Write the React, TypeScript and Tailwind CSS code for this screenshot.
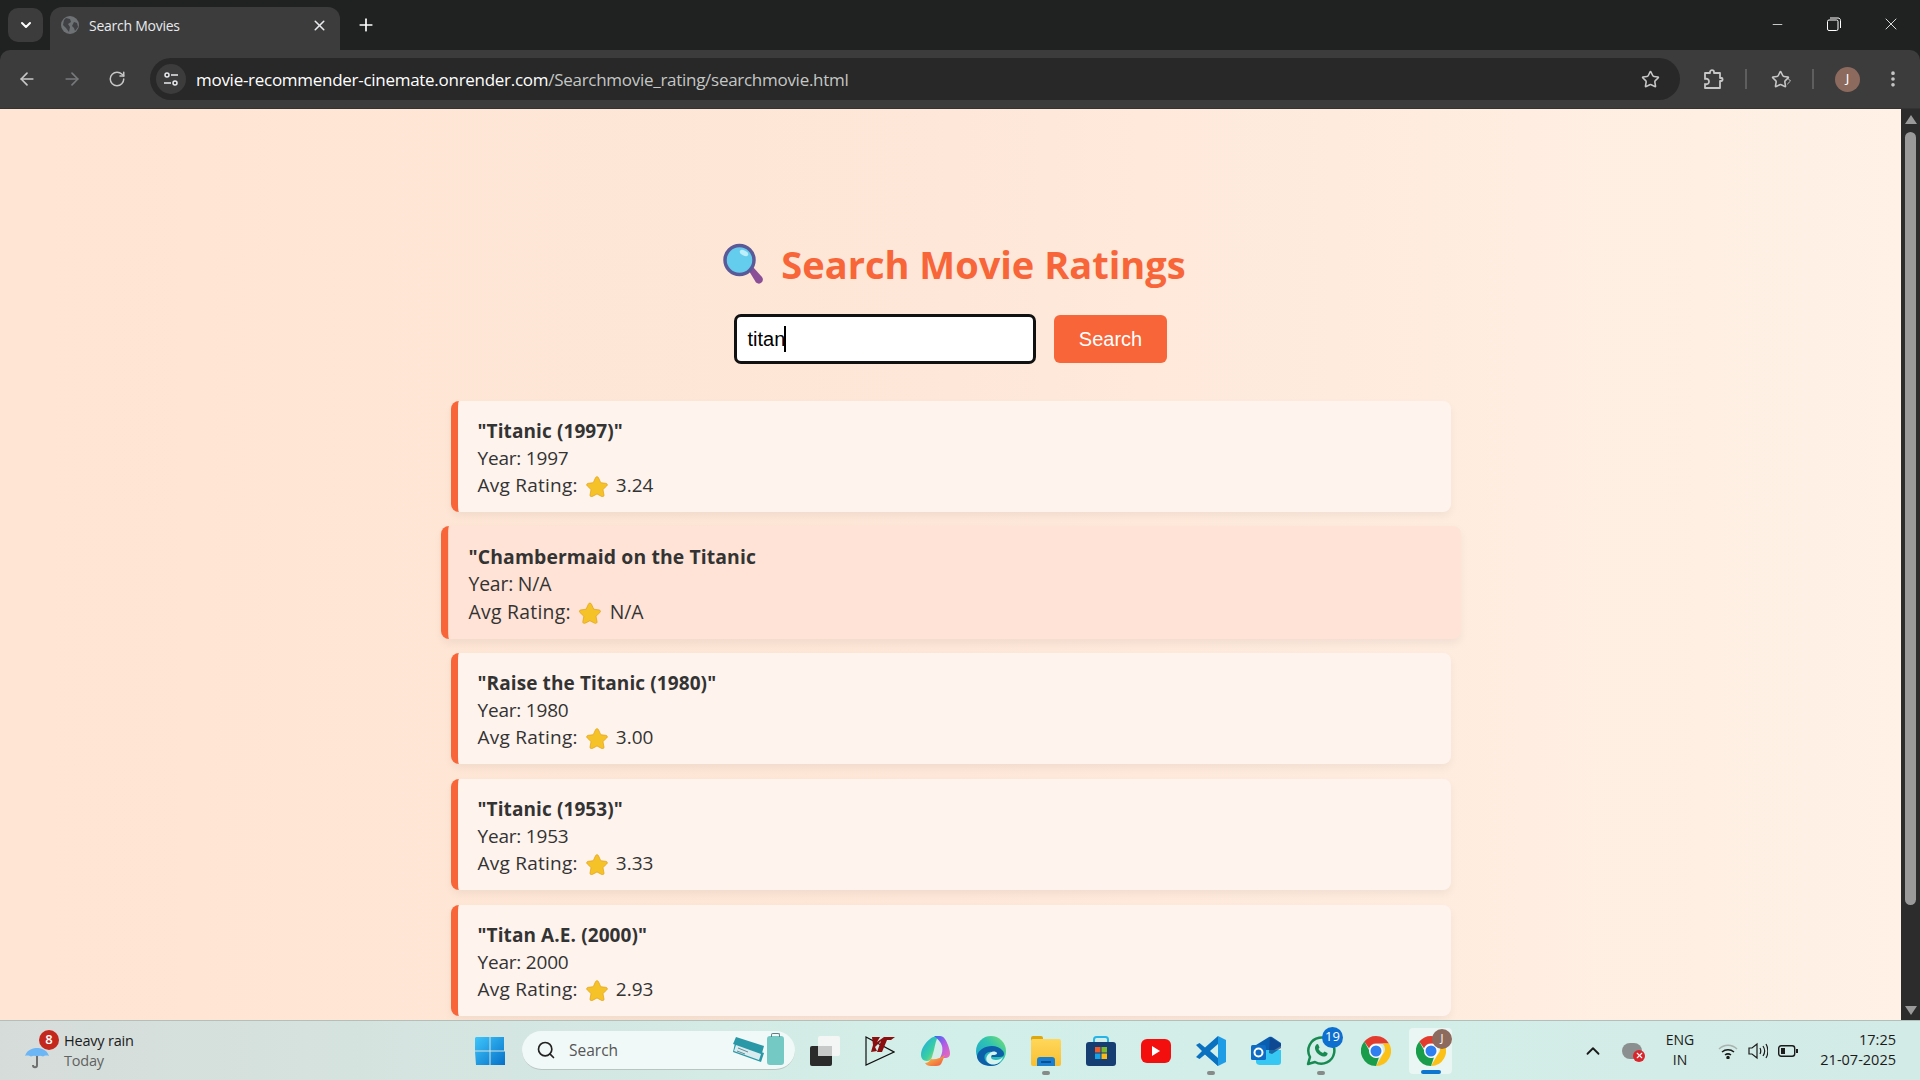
import { ArrowLeft, ArrowRight, ChevronDown, ChevronUp, EllipsisVertical, Minus, Plus, RotateCw, Search, Star, X } from "lucide-react";

const movies = [
  { title: '"Titanic (1997)"', year: "1997", rating: "3.24" },
  { title: '"Chambermaid on the Titanic', year: "N/A", rating: "N/A", hover: true },
  { title: '"Raise the Titanic (1980)"', year: "1980", rating: "3.00" },
  { title: '"Titanic (1953)"', year: "1953", rating: "3.33" },
  { title: '"Titan A.E. (2000)"', year: "2000", rating: "2.93" },
];

function GoldStar() {
  return (
    <svg width="22" height="22" viewBox="0 0 24 24" className="ml-[8px] mr-[8px] shrink-0">
      <path
        d="M12 1.8c.8 0 1.3.5 1.7 1.3l2.4 5.3 5.5.7c1.700.2 2.200 1.800 1 2.900l-4.100 3.900 1.100 5.700c.3 1.600-1.200 2.600-2.600 1.800L12 20.700l-5 2.700c-1.400.8-2.900-.2-2.600-1.800l1.100-5.700-4.100-3.900c-1.200-1.100-.7-2.700 1-2.900l5.500-.7 2.400-5.300c.4-.8.9-1.300 1.700-1.300z"
        fill="#f5c227"
        stroke="#e2a21b"
        strokeWidth="0.8"
      />
    </svg>
  );
}

function Magnifier() {
  return (
    <svg width="42" height="42" viewBox="0 0 42 42" className="mr-[17px] shrink-0">
      <path d="M27 28l4-4 9 10c1.500 2 1 4-.5 5.500s-3.500 1.500-5.500 0z" fill="#8a4f96" />
      <circle cx="17.500" cy="17" r="14.500" fill="#64cdee" stroke="#5b5a99" strokeWidth="3.500" />
      <ellipse cx="22" cy="10" rx="4.500" ry="2.500" fill="#bdeefa" transform="rotate(25 22 10)" />
    </svg>
  );
}

function MovieCard({ title, year, rating, hover }: { title: string; year: string; rating: string; hover?: boolean }) {
  return (
    <div
      className={`h-[111px] w-[1000px] shrink-0 rounded-lg border-l-[7px] border-[#f76538] px-5 pt-[17px] text-[19px] leading-[27px] text-[#333333] shadow-[0_4px_8px_rgba(0,0,0,0.05)] ${
        hover ? "scale-[1.02] bg-[#ffe3d6]" : "bg-[#fff3ee]"
      }`}
    >
      <div className="font-bold tracking-[0.1px]">{title}</div>
      <div className="tracking-[-0.2px]">Year: {year}</div>
      <div className="flex items-center">
        <span className="tracking-[0.25px]">Avg Rating:</span>
        <GoldStar /> {rating}
      </div>
    </div>
  );
}

function Globe() {
  return (
    <svg width="18" height="18" viewBox="0 0 18 18">
      <circle cx="9" cy="9" r="9" fill="#6f7275" />
      <path d="M5 2l4 1 1 3-3 2 2 3-1 5-3-4-3-3 1-5zM13 6l3 1 1 4-3 4-1-3-2-2z" fill="#3f4144" />
    </svg>
  );
}

function ChromeLogo() {
  return (
    <svg width="30" height="30" viewBox="0 0 30 30">
      <path d="M15 0a15 15 0 0 1 13 7.500H15a7.500 7.500 0 0 0-7 4.800L3.300 5.600A15 15 0 0 1 15 0z" fill="#e33b2e" />
      <path d="M28 7.500A15 15 0 0 1 15 30l6.500-11.200a7.500 7.500 0 0 0 0-11.300z" fill="#fbc117" />
      <path d="M3.300 5.600L8.500 15a7.500 7.500 0 0 0 9.500 6.300L15 30A15 15 0 0 1 3.300 5.600z" fill="#199d4b" />
      <circle cx="15" cy="15" r="7" fill="#fff" />
      <circle cx="15" cy="15" r="5.500" fill="#2f7ff0" />
    </svg>
  );
}

function Edge() {
  return (
    <svg width="30" height="30" viewBox="0 0 30 30">
      <defs>
        <linearGradient id="edgeTop" x1="0" y1="1" x2="1" y2="0">
          <stop offset="0" stopColor="#1a9fd8" />
          <stop offset="0.6" stopColor="#2fc4b0" />
          <stop offset="1" stopColor="#7fe06a" />
        </linearGradient>
      </defs>
      <circle cx="15" cy="15" r="15" fill="url(#edgeTop)" />
      <path d="M1 20C3 10 20 6 27 15c2 3 1 6-3 6h-7c-3 0-4-3-1-5-5-1-9 3-7 8 2 4 9 6 16 2-3 3-7 4-10 4C7 30 1 26 1 20z" fill="#0c5fa8" />
      <path d="M14 17c2-2 6-2 7 0 0 2-3 2-5 2-2 2-1 5 4 5 3 0 5-1 7-3-2 6-8 9-13 7-5-2-5-8 0-11z" fill="#d7f3ee" />
    </svg>
  );
}

function Folder() {
  return (
    <div className="relative h-[30px] w-[30px]">
      <div className="absolute left-0 top-0 h-2 w-3 rounded-t-[2px] bg-[#dda80f]" />
      <div className="absolute left-0 top-[3px] h-[27px] w-[30px] rounded-[2px] bg-gradient-to-b from-[#ffd75a] to-[#f9bf2e]" />
      <div className="absolute bottom-0 left-[6px] h-[9px] w-[18px] rounded-t-[3px] bg-[#1a7fd0]" />
      <div className="absolute bottom-[3px] left-[10px] h-[2px] w-[10px] bg-[#0c4f92]" />
    </div>
  );
}

function Store() {
  return (
    <svg width="30" height="30" viewBox="0 0 30 30">
      <path d="M8 7V3.500C8 2 9 1 10.500 1h9C21 1 22 2 22 3.500V7" fill="none" stroke="#27b5e8" strokeWidth="2" />
      <rect x="0" y="6" width="30" height="24" rx="3" fill="#173e72" />
      <rect x="9" y="11" width="5.500" height="5.500" fill="#f05a27" />
      <rect x="15.500" y="11" width="5.500" height="5.500" fill="#7dbb2c" />
      <rect x="9" y="17.500" width="5.500" height="5.500" fill="#15a3e8" />
      <rect x="15.500" y="17.500" width="5.500" height="5.500" fill="#fbb917" />
    </svg>
  );
}

function Vscode() {
  return (
    <svg width="30" height="30" viewBox="0 0 30 30">
      <path d="M22 0l8 4v22l-8 4-13-12 13-10v-8z" fill="#1f9ce6" />
      <path d="M22 0v30L9 18.500 3.500 23 0 21l6-6-6-6 3.500-2L9 11.500z" fill="#0a71c0" />
      <path d="M22 8l-8 7 8 7z" fill="#d3efe9" />
    </svg>
  );
}

function Outlook() {
  return (
    <svg width="30" height="30" viewBox="0 0 30 30">
      <path d="M5 9l13-8c1-.5 2-.5 3 0l9 6v3L18 17H5z" fill="#0a5eb0" />
      <path d="M5 14h25v12c0 2-1 3-3 3H9c-2 0-4-1-4-3z" fill="#36c8f2" />
      <path d="M19 1l11 7v4l-9 6-3-1z" fill="#0f3f86" opacity="0.7" />
      <rect x="0" y="9" width="15" height="15" rx="1.500" fill="#0f6cc4" />
      <circle cx="7.500" cy="16.500" r="4" fill="none" stroke="#fff" strokeWidth="2" />
    </svg>
  );
}

function Whatsapp() {
  return (
    <svg width="30" height="30" viewBox="0 0 30 30">
      <path d="M2 28l2-7A13 13 0 1 1 9 26z" fill="none" stroke="#178a52" strokeWidth="2.500" strokeLinejoin="round" />
      <path d="M10 9c1-1.500 2-1 2.500 0l1 2.500-1 1.500c1 2 2.500 3 4.500 4l1.500-1.500 3 1.500c.5 2-2 4-4 3.500-4-.5-8-4-8.500-8-.2-1.500.3-2.500 1-3.500z" fill="#178a52" />
    </svg>
  );
}

function Copilot() {
  return (
    <svg width="30" height="30" viewBox="0 0 30 30">
      <defs>
        <linearGradient id="copA" x1="0" y1="0" x2="1" y2="1">
          <stop offset="0" stopColor="#1aa7ec" />
          <stop offset="0.6" stopColor="#3ad0a0" />
          <stop offset="1" stopColor="#f6d34a" />
        </linearGradient>
        <linearGradient id="copB" x1="0" y1="0" x2="1" y2="1">
          <stop offset="0" stopColor="#2a6cf0" />
          <stop offset="0.5" stopColor="#b05ce8" />
          <stop offset="1" stopColor="#f06cb0" />
        </linearGradient>
        <linearGradient id="copC" x1="0" y1="0" x2="1" y2="1">
          <stop offset="0" stopColor="#f6d34a" />
          <stop offset="1" stopColor="#f0503c" />
        </linearGradient>
      </defs>
      <path d="M9 3c2-2 5-3 8-2-2 3-3 8-4 13l-2 7c-1 3-3 4-5 4-4 0-6-3-6-6 0-6 4-12 9-16z" fill="url(#copA)" />
      <path d="M13 0h6c4 0 6 4 8 9 2 6 4 12-2 13h-6c2-4 3-8 2-12-1-4-4-7-8-10z" fill="url(#copB)" />
      <path d="M10 23c4 1 10-1 14-4l-3 7c-1 3-3 4-6 4h-5c-3 0-5-1-6-3 2 0 4-1 6-4z" fill="url(#copC)" />
    </svg>
  );
}

function TaskIcon({ children, dot, active }: { children: React.ReactNode; dot?: boolean; active?: boolean }) {
  return (
    <div className={`relative mx-[6px] flex h-[46px] w-[43px] items-center justify-center rounded-[4px] ${active ? "bg-[#e9f6f3]" : ""}`}>
      {children}
      {dot && <div className="absolute bottom-[-1px] h-[4px] w-2 rounded-full bg-[#868b8a]" />}
      {active && <div className="absolute bottom-0 h-[4px] w-5 rounded-full bg-[#0f76d0]" />}
    </div>
  );
}

export default function App() {
  return (
    <div className="flex h-[1080px] w-[1920px] flex-col overflow-hidden bg-[#202221] font-['Noto_Sans',sans-serif]">
      {/* tab strip */}
      <div className="flex h-[50px] shrink-0 items-end bg-[#202221] text-white">
        <div className="mb-2 ml-2 flex h-[34px] w-[35px] items-center justify-center rounded-[10px] bg-[#3c3c3c]">
          <ChevronDown size={16} strokeWidth={3} />
        </div>
        <div className="ml-[7px] flex h-[43px] w-[290px] items-center rounded-t-[12px] bg-[#3c3c3c] pb-[7px] pl-[11px] pr-[12px] font-['Open_Sans',sans-serif] text-[14px] text-[#e8eaed]">
          <Globe />
          <span className="ml-[10px] flex-1 tracking-[-0.25px]">Search Movies</span>
          <X size={17} strokeWidth={2.2} />
        </div>
        <Plus size={20} strokeWidth={2} className="mb-[15px] ml-[16px]" />
        <div className="mb-[16px] ml-auto flex items-center pr-[20px]">
          <Minus size={15} strokeWidth={1.2} className="mr-[42px]" />
          <svg width="14" height="14" viewBox="0 0 14 14" fill="none" stroke="white" strokeWidth="1" className="mr-[40px]">
            <rect x="0.500" y="3" width="10.500" height="10.500" rx="1.500" />
            <path d="M3 1h8c1.500 0 2.500 1 2.500 2.500V11" />
          </svg>
          <X size={20} strokeWidth={1} className="-mr-[1px]" />
        </div>
      </div>

      {/* toolbar */}
      <div className="flex h-[59px] shrink-0 items-center rounded-t-[10px] border-b border-[#333333] bg-[#3c3c3c] text-[#c7c7c7]">
        <ArrowLeft size={20} strokeWidth={2} className="ml-[17px]" />
        <ArrowRight size={20} strokeWidth={2} className="ml-[25px] text-[#77797b]" />
        <RotateCw size={18} strokeWidth={2} className="ml-[26px]" />
        <div className="ml-[24px] flex h-[42px] w-[1530px] items-center rounded-full bg-[#282828] pl-[6px] pr-[20px]">
          <div className="flex h-[30px] w-[30px] items-center justify-center rounded-full bg-[#3c3c3c]">
            <svg width="16" height="16" viewBox="0 0 16 16" fill="none" stroke="#e8eaed" strokeWidth="1.500">
              <circle cx="4" cy="4" r="2" />
              <path d="M8 4h7M1 12h7" />
              <circle cx="12" cy="12" r="2" />
            </svg>
          </div>
          <div className="ml-[10px] flex-1 pt-[1px] font-['Open_Sans',sans-serif] text-[17px] tracking-[-0.28px] text-white">
            movie-recommender-cinemate.onrender.com<span className="text-[#c4c7c5]">/Searchmovie_rating/searchmovie.html</span>
          </div>
          <Star size={19} strokeWidth={2} />
        </div>
        <svg width="20" height="20" viewBox="0 0 20 20" fill="none" stroke="#c7c7c7" strokeWidth="1.800" className="ml-[24px]">
          <path d="M1 4h5V3c0-2.500 4-2.500 4 0v1h6v5h1.500c1.500 0 1.500 3 0 3H16v7H1v-4c3 1 4-1 4-2.500S3.500 9 1 10z" strokeLinejoin="round" />
        </svg>
        <div className="ml-[21px] h-[20px] w-[2px] bg-[#5e5e5e]" />
        <div className="ml-[24px] flex w-[22px] items-center">
          <Star size={19} strokeWidth={2} className="shrink-0" />
          <ChevronDown size={12} strokeWidth={2} className="-ml-[7px] mt-[3px] shrink-0 -rotate-90" />
        </div>
        <div className="ml-[19px] h-[20px] w-[2px] bg-[#5e5e5e]" />
        <div className="ml-[21px] flex h-[25px] w-[25px] items-center justify-center rounded-full bg-[#8d6a5e] text-[13px] text-white">J</div>
        <EllipsisVertical size={20} strokeWidth={2.4} className="ml-[23px]" />
      </div>

      {/* page */}
      <div className="flex h-[911px] min-h-0 shrink-0">
        <div className="flex flex-1 flex-col items-center overflow-hidden bg-gradient-to-r from-[#ffe5d3] via-[#fee7d8] to-[#fff1e6] pt-[130px] font-['Open_Sans',sans-serif]">
          <div className="flex h-[50px] items-center pl-[7px] text-[38px] leading-[50px] font-bold text-[#f76538]">
            <Magnifier />
            <span>Search Movie Ratings</span>
          </div>
          <div className="mt-[25px] flex items-center gap-[18px] pr-[1px] font-['Liberation_Sans',sans-serif]">
            <div className="flex h-[50px] w-[302px] items-center rounded-[7px] border-[3px] border-[#111111] bg-white pb-[1px] pl-[11px] text-[20px] text-black">
              titan<span className="ml-[-1px] h-[26px] w-[2px] bg-black" />
            </div>
            <button className="h-[48px] w-[113px] rounded-[6px] bg-[#f76538] pb-[1px] pl-[1px] text-[20px] text-white">Search</button>
          </div>
          <div className="mt-[37px] flex flex-col gap-[15px]">
            {movies.map((movie) => (
              <MovieCard key={movie.title} {...movie} />
            ))}
          </div>
        </div>
        <div className="relative flex w-[19px] flex-col items-center bg-[#2c2c2c]">
          <div className="mt-[6px] h-0 w-0 border-x-[6px] border-b-[9px] border-x-transparent border-b-[#9a9a9a]" />
          <div className="mt-[8px] h-[773px] w-[11px] rounded-full bg-[#9a9a9a]" />
          <div className="mb-[5px] mt-auto h-0 w-0 border-x-[6px] border-t-[9px] border-x-transparent border-t-[#9a9a9a]" />
        </div>
      </div>

      {/* taskbar */}
      <div className="relative flex h-[60px] shrink-0 items-center border-t border-[#b2bfbb] bg-gradient-to-r from-[#d6dcd9] via-[#d3efe9] to-[#d3ebe6] font-['Open_Sans',sans-serif] text-[#1b1b1b]">
        <div className="ml-[24px] flex w-[436px] items-center">
          <div className="relative h-[40px] w-[40px]">
            <svg width="26" height="26" viewBox="0 0 26 26" className="absolute bottom-[1px] left-0">
              <path d="M1 12C3 5 10 4 13 4s10 1 12 8c-3-1-5 0-6 .5-2-1-4-1-6 0-2-1-4-1-6 0-1-.5-4-1.500-6-.5z" fill="#6cb6f5" />
              <path d="M13 12v9c0 3-4 3-4 0" fill="none" stroke="#6f6f6f" strokeWidth="2" />
            </svg>
            <div className="absolute left-[15px] top-[-1px] flex h-5 w-5 items-center justify-center rounded-full bg-[#c4281c] text-[13px] font-semibold text-white">8</div>
          </div>
          <div className="text-[14.500px] leading-[20px] tracking-[-0.2px]">
            <div>Heavy rain</div>
            <div className="text-[#5f6361]">Today</div>
          </div>
        </div>

        <div className="flex items-center">
          <svg width="30" height="30" viewBox="0 0 30 30" className="ml-[15px]">
            <defs>
              <linearGradient id="winLogo" x1="0" y1="0" x2="1" y2="1">
                <stop offset="0" stopColor="#3fc6fb" />
                <stop offset="1" stopColor="#0670c8" />
              </linearGradient>
            </defs>
            <path d="M1 1h13.500v13.500H0V2zM15.500 1H29v13.500H15.500zM0 15.500h14.500V29H1zM15.500 15.500H30V29H15.500z" fill="url(#winLogo)" />
          </svg>
          <div className="ml-[17px] flex h-[39px] w-[273px] items-center rounded-full border-b border-[#b8c6c2] bg-[#f0f9f7] pl-[14px] text-[15.500px] text-[#555]">
            <Search size={20} strokeWidth={2} className="text-[#222]" />
            <span className="ml-[13px] flex-1 pt-[1px]">Search</span>
            <svg width="32" height="26" viewBox="0 0 32 26">
              <path d="M3 0l28 9-2 7L0 7z" fill="#2a98a6" />
              <path d="M2 6l29 10-3 9L0 15z" fill="#2a98a6" />
              <path d="M3 8l25 9-2 6L1 14z" fill="#d8ecef" />
              <path d="M5 11l10 4M4 14l8 3" stroke="#6a8a94" strokeWidth="1" />
            </svg>
            <div className="relative ml-[2px] mr-[11px] h-[29px] w-[17px] rounded-[3px] bg-[#74c9c4]">
              <div className="absolute -top-[3px] left-[4px] h-[4px] w-[9px] rounded-t-[2px] border border-b-0 border-[#5f7f86]" />
            </div>
          </div>
          <div className="relative ml-[15px] h-[30px] w-[30px]">
            <div className="absolute right-0 top-0 h-[20px] w-[22px] rounded-[2px] bg-[#f4f6f5]" />
            <div className="absolute bottom-0 left-0 h-[20px] w-[22px] rounded-[2px] bg-[#2b2b2b]" />
            <div className="absolute left-[8px] top-[10px] h-[10px] w-[14px] bg-[#c6c9c8]" />
          </div>
          <svg width="30" height="30" viewBox="0 0 30 30" className="ml-[25px]">
            <path d="M1 1l28 15L1 29z" fill="none" stroke="#111" strokeWidth="1.200" />
            <path d="M7 1h8l-3 5 7-5h11l-4 3h-4l-5 12h-5l4-11-6 6 2 4-6 1 2-7z" fill="#8a0f0f" />
          </svg>
          <div className="ml-[26px]"><Copilot /></div>
        </div>

        <div className="ml-[12px] flex items-center">
          <TaskIcon><Edge /></TaskIcon>
          <TaskIcon dot><Folder /></TaskIcon>
          <TaskIcon><Store /></TaskIcon>
          <TaskIcon>
            <div className="flex h-[24px] w-[30px] items-center justify-center rounded-[6px] bg-[#f40f0f]">
              <div className="h-0 w-0 border-y-[5px] border-l-[8px] border-y-transparent border-l-white" />
            </div>
          </TaskIcon>
          <TaskIcon dot><Vscode /></TaskIcon>
          <TaskIcon><Outlook /></TaskIcon>
          <TaskIcon dot>
            <Whatsapp />
            <div className="absolute -right-[1px] -top-[1px] flex h-[21px] w-[21px] items-center justify-center rounded-full bg-[#0d6fd0] text-[13px] text-white">19</div>
          </TaskIcon>
          <TaskIcon><ChromeLogo /></TaskIcon>
          <TaskIcon active>
            <ChromeLogo />
            <div className="absolute right-[0px] top-[1px] flex h-[20px] w-[20px] items-center justify-center rounded-full bg-[#8d6a5e] text-[11px] text-white">J</div>
          </TaskIcon>
        </div>

        <div className="ml-auto flex items-center pr-[24px]">
          <ChevronUp size={22} strokeWidth={2} />
          <div className="relative ml-[18px] h-[16px] w-[20px] rounded-full bg-[#8c8f8f]">
            <div className="absolute -bottom-[3px] -right-[3px] flex h-[12px] w-[12px] items-center justify-center rounded-full bg-[#d8262c]">
              <X size={9} strokeWidth={3} className="text-white" />
            </div>
          </div>
          <div className="mb-[1px] ml-[21px] w-[34px] text-center text-[14px] leading-[20px]">ENG<br />IN</div>
          <svg width="20" height="16" viewBox="0 0 20 16" fill="none" stroke="#1b1b1b" strokeWidth="1.500" className="ml-[21px]">
            <path d="M1 6c5-5 13-5 18 0" stroke="#a9b3b0" />
            <path d="M4 9c3.500-3 8.500-3 12 0M7 12c2-1.500 4-1.500 6 0" />
            <circle cx="10" cy="14.500" r="1" fill="#1b1b1b" />
          </svg>
          <svg width="20" height="18" viewBox="0 0 20 18" fill="none" stroke="#1b1b1b" strokeWidth="1.200" className="ml-[10px]">
            <path d="M1 6h3l5-4v14l-5-4H1z" />
            <path d="M12 6c1 2 1 4 0 6M15 4c2 3 2 7 0 10M18 2c2.500 4 2.500 10 0 14" />
          </svg>
          <svg width="20" height="12" viewBox="0 0 20 12" className="ml-[10px]">
            <rect x="0.700" y="0.700" width="16" height="10.600" rx="2.500" fill="none" stroke="#1b1b1b" strokeWidth="1.400" />
            <rect x="3" y="3" width="4" height="6" fill="#1b1b1b" />
            <rect x="18" y="4" width="2" height="4" fill="#1b1b1b" />
          </svg>
          <div className="mb-[1px] ml-[20px] w-[78px] whitespace-nowrap text-right text-[14.500px] leading-[20px]">
            <div>17:25</div>
            <div>21-07-2025</div>
          </div>
        </div>
      </div>
    </div>
  );
}
